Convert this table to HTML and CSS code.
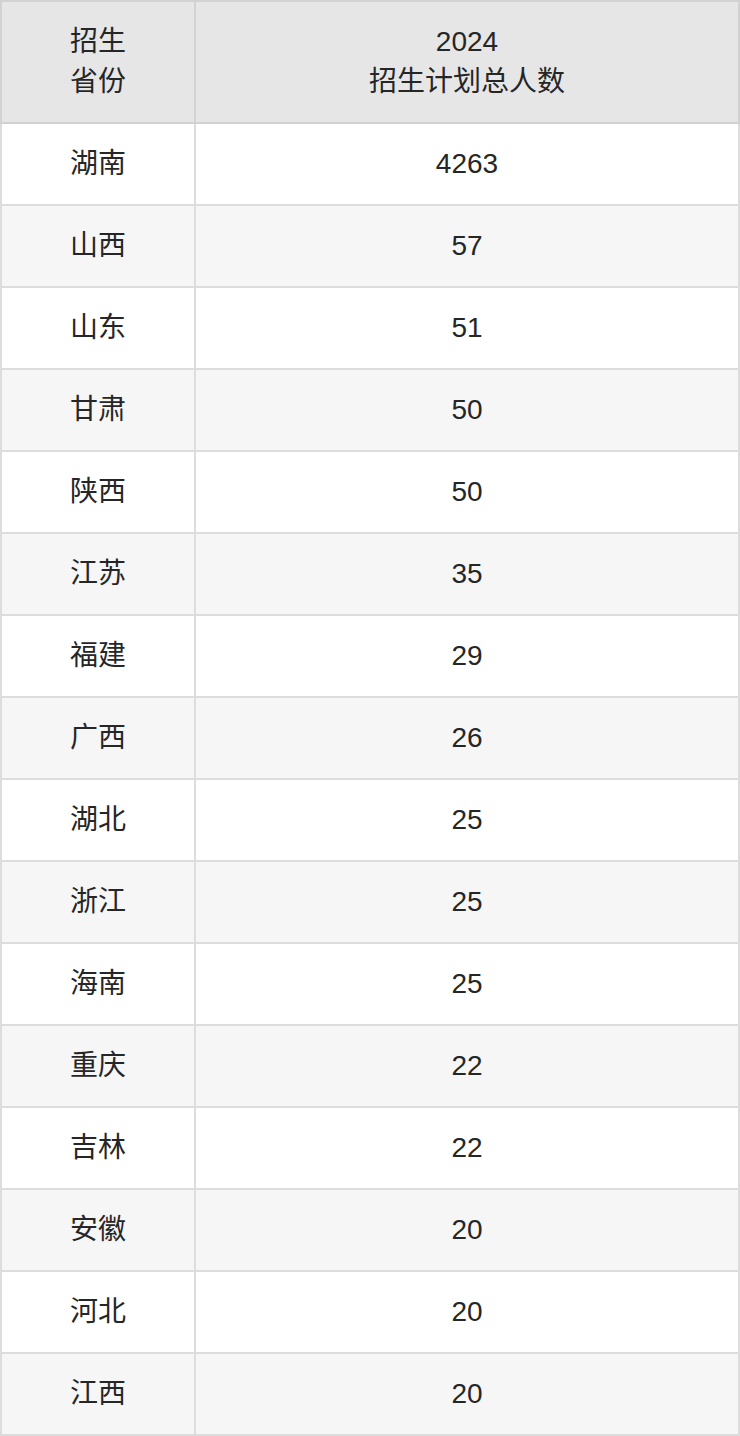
FILE: index.html
```html
<!DOCTYPE html>
<html lang="zh-CN">
<head>
<meta charset="utf-8">
<title>招生计划</title>
<link rel="stylesheet" href="styles.css">
</head>
<body>
<table class="plan">
  <thead>
    <tr><th class="col-prov">招生<br>省份</th><th>2024<br>招生计划总人数</th></tr>
  </thead>
  <tbody>
    <tr><td>湖南</td><td>4263</td></tr>
    <tr><td>山西</td><td>57</td></tr>
    <tr><td>山东</td><td>51</td></tr>
    <tr><td>甘肃</td><td>50</td></tr>
    <tr><td>陕西</td><td>50</td></tr>
    <tr><td>江苏</td><td>35</td></tr>
    <tr><td>福建</td><td>29</td></tr>
    <tr><td>广西</td><td>26</td></tr>
    <tr><td>湖北</td><td>25</td></tr>
    <tr><td>浙江</td><td>25</td></tr>
    <tr><td>海南</td><td>25</td></tr>
    <tr><td>重庆</td><td>22</td></tr>
    <tr><td>吉林</td><td>22</td></tr>
    <tr><td>安徽</td><td>20</td></tr>
    <tr><td>河北</td><td>20</td></tr>
    <tr><td>江西</td><td>20</td></tr>
  </tbody>
</table>
</body>
</html>
```
FILE: styles.css
```css
html, body {
  margin: 0;
  padding: 0;
  background: #ffffff;
}
.plan {
  width: 740px;
  border-collapse: collapse;
  table-layout: fixed;
  font-family: "Liberation Sans", "Noto Sans CJK SC", sans-serif;
  font-size: 28px;
  line-height: 40px;
  color: #262626;
}
.plan th, .plan td {
  border: 2px solid #dddddd;
  text-align: center;
  vertical-align: middle;
  padding: 0;
  font-weight: normal;
}
.plan th {
  height: 120px;
  background: #e6e6e6;
  border-color: #d2d2d2;
}
.plan .col-prov {
  width: 192px;
}
.plan td {
  height: 80px;
}
.plan tbody tr:nth-child(even) td {
  background: #f6f6f6;
}
.plan tbody tr:nth-child(odd) td {
  background: #ffffff;
}
```
